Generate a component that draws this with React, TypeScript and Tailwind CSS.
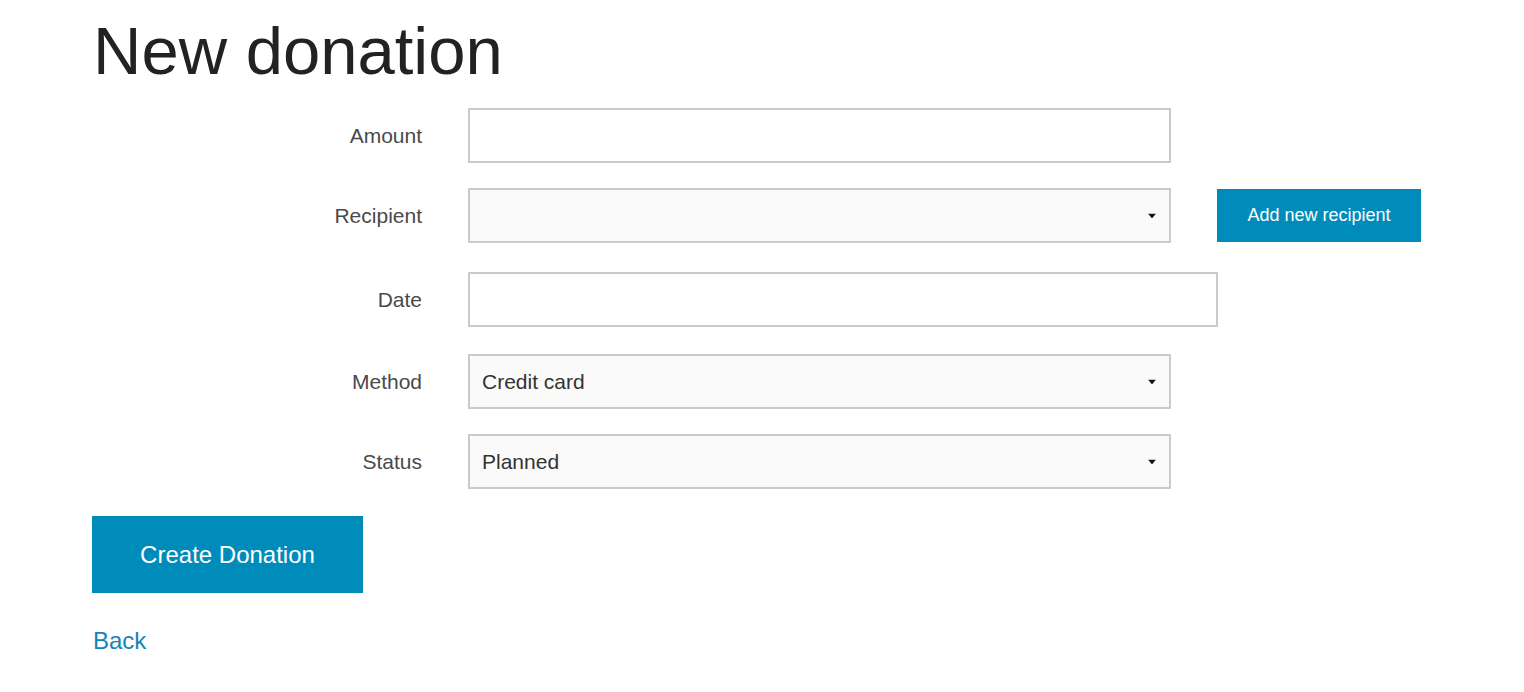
import React from "react";

const Arrow = () => (
  <svg
    className="pointer-events-none absolute right-[15px] top-1/2 -translate-y-1/2"
    width="8"
    height="5"
    viewBox="0 0 8 5"
  >
    <path d="M0 0 H8 L4 5 Z" fill="#111" />
  </svg>
);

const Label = ({ children }: { children: React.ReactNode }) => (
  <label className="w-[330px] shrink-0 text-right text-[21px] text-[#4a4a4a]">
    {children}
  </label>
);

const Select = ({ value, options }: { value: string; options: string[] }) => (
  <div className="relative w-[703px]">
    <select
      defaultValue={value}
      className="h-[55px] w-full appearance-none border-2 border-[#cacaca] bg-[#fafafa] pl-[12px] text-[21px] text-[#333] outline-none"
    >
      {options.map((o) => (
        <option key={o} value={o}>
          {o}
        </option>
      ))}
    </select>
    <Arrow />
  </div>
);

export default function App() {
  return (
    <div className="min-h-screen bg-white font-['Liberation_Sans',Arial,sans-serif]">
      <div className="pl-[92px] pt-[17px]">
        <h1 className="ml-[1px] text-[67px] leading-none text-[#222]">New donation</h1>

        <form className="mt-[24px]" onSubmit={(e) => e.preventDefault()}>
          {/* Amount */}
          <div className="mb-[25px] flex items-center gap-[46px]">
            <Label>Amount</Label>
            <input
              type="text"
              className="h-[55px] w-[703px] border-2 border-[#cacaca] bg-white px-[12px] text-[21px] outline-none"
            />
          </div>

          {/* Recipient */}
          <div className="mb-[29px] flex items-center gap-[46px]">
            <Label>Recipient</Label>
            <Select value="" options={[""]} />
            <button
              type="button"
              className="h-[53px] w-[204px] bg-[#008cba] text-[18px] text-white"
            >
              Add new recipient
            </button>
          </div>

          {/* Date */}
          <div className="mb-[27px] flex items-center gap-[46px]">
            <Label>Date</Label>
            <input
              type="text"
              className="h-[55px] w-[750px] border-2 border-[#cacaca] bg-white px-[12px] text-[21px] outline-none"
            />
          </div>

          {/* Method */}
          <div className="mb-[25px] flex items-center gap-[46px]">
            <Label>Method</Label>
            <Select value="Credit card" options={["Credit card", "Cash", "Bank transfer"]} />
          </div>

          {/* Status */}
          <div className="flex items-center gap-[46px]">
            <Label>Status</Label>
            <Select value="Planned" options={["Planned", "Completed"]} />
          </div>

          <button
            type="submit"
            className="mt-[27px] h-[77px] w-[271px] bg-[#008cba] text-[24px] text-white"
          >
            Create Donation
          </button>
        </form>

        <a href="#" className="mt-[36px] ml-[1px] block text-[24px] leading-none text-[#1585b5]">
          Back
        </a>
      </div>
    </div>
  );
}
